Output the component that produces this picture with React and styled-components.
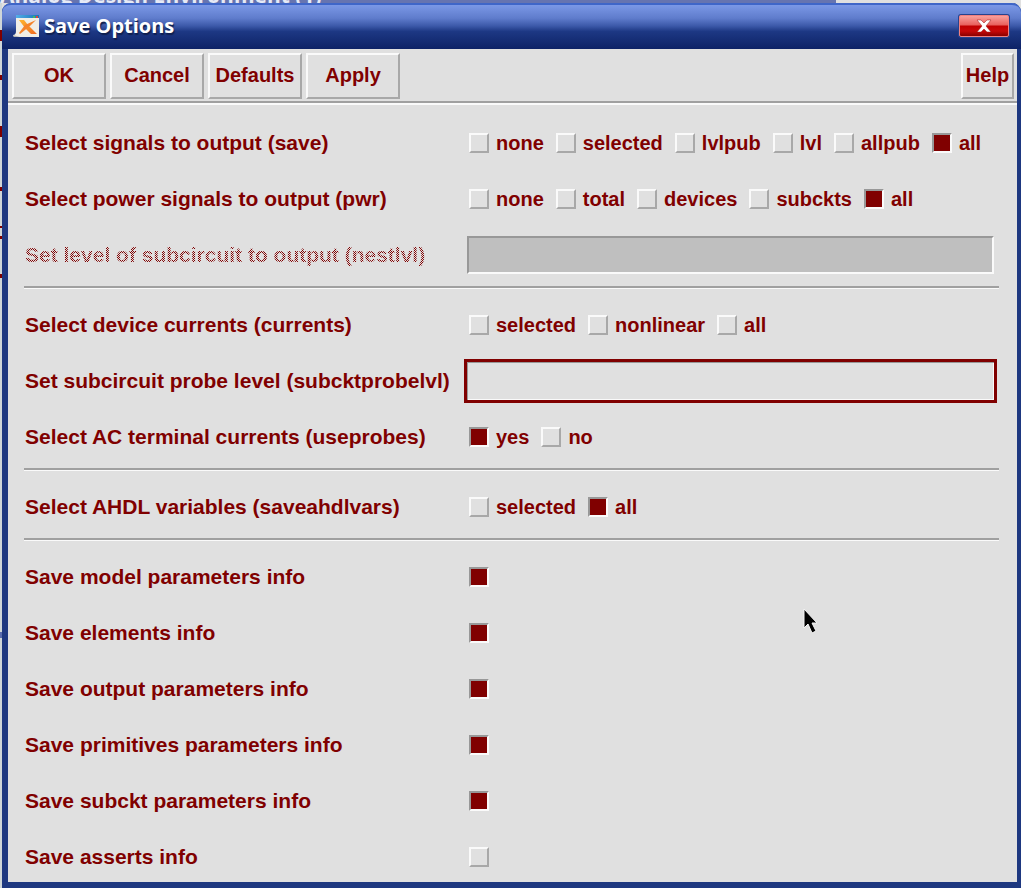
import React from "react";
import styled, { createGlobalStyle, css } from "styled-components";

const maroon = "#800000";
const face = "#e0e0e0";

const GlobalStyle = createGlobalStyle`
  *, *::before, *::after { box-sizing: border-box; }
  body { margin: 0; background: ${face}; color: ${maroon}; font: bold 20px/28px "Liberation Sans", Arial, sans-serif; }
  button, input { font: inherit; color: inherit; }
`;

const raised = css`
  border: 2px solid;
  border-color: #fafafa #a8a8a8 #a8a8a8 #fafafa;
`;
const sunken = css`
  border: 2px solid;
  border-color: #989898 #fafafa #fafafa #989898;
`;

const Desktop = styled.div`
  position: relative;
  min-height: 100vh;
  overflow: hidden;
  padding-left: 2px;
  background:
    linear-gradient(
      transparent 30px, ${maroon} 30px 41px, transparent 41px 75px,
      ${maroon} 75px 80px, transparent 80px 126px, ${maroon} 126px 137px,
      transparent 137px 187px, ${maroon} 187px 191px, transparent 191px 226px,
      ${maroon} 226px 228px, transparent 228px 236px, ${maroon} 236px 239px,
      transparent 239px 274px, ${maroon} 274px 278px, transparent 278px 632px,
      #5a6cae 632px 638px, transparent 638px
    ) 0 0 / 2px 100% no-repeat,
    linear-gradient(90deg, #cfd6d8 2px, ${face} 2px);
`;
const BackTitle = styled.div`
  height: 3px;
  width: 82%;
  margin-left: -2px;
  display: flex;
  align-items: flex-end;
  overflow: hidden;
  background: #6674b0;
  color: #e6eaf6;
  font: bold 21px/16px "Open Sans", sans-serif;
  white-space: nowrap;
`;
const Dialog = styled.section`
  display: flex;
  flex-direction: column;
  border: solid #1e3880;
  border-width: 0 4px 6px 6px;
  border-radius: 9px 9px 0 0;
  background: ${face};
`;
const TitleBar = styled.header`
  display: flex;
  align-items: center;
  height: 46px;
  margin: 0 -4px 0 -6px;
  padding: 0 12px 2px 10px;
  gap: 4px;
  border-radius: 9px 9px 0 0;
  border-top: 2px solid #3f66c8;
  background: linear-gradient(#7b98e6, #5f7ccc 30%, #3b58a8 48%, #1d3884 60%, #0d2266);
`;
const Title = styled.h1`
  flex: 1;
  margin: 0;
  color: #fff;
  font: bold 20px/28px "Open Sans", sans-serif;
  text-shadow: 1px 2px 1px #102050;
`;
const CloseButton = styled.button`
  display: grid;
  place-items: center;
  width: 50px;
  height: 22px;
  padding: 0;
  border: 1px solid #f08080;
  border-radius: 2px;
  background: linear-gradient(#f9a09c, #e8605c 45%, #c00000 50%, #c80808 75%, #8a0000);
  box-shadow: 0 0 0 1px #27438e;
`;
const Toolbar = styled.nav`
  display: flex;
  gap: 4px;
  padding: 4px 3px 2px 4px;
  border-bottom: 2px solid #a0a0a0;
  box-shadow: 0 2px 0 #fafafa;
`;
const ToolButton = styled.button`
  ${raised}
  width: ${(p) => (p.$compact ? 53 : 94)}px;
  height: 46px;
  margin-left: ${(p) => (p.$compact ? "auto" : 0)};
  padding: 0 0 2px;
  background: ${face};
`;
const Form = styled.form`
  display: flex;
  flex-direction: column;
  padding: 26px 18px 11px 16px;
`;
const Section = styled.div`
  display: flex;
  flex-direction: column;
  gap: 28px;
`;
const Separator = styled.hr`
  width: 100%;
  margin: 17px 0 22px;
  border: solid;
  border-width: 2px 0 1px;
  border-color: #a0a0a0 transparent #fafafa;
`;
const Row = styled.div`
  display: grid;
  grid-template: 28px / 440px 1fr;
  align-items: center;
`;
const Label = styled.label`
  justify-self: start;
  padding-left: 1px;
  font-size: 21px;
  white-space: nowrap;
  ${(p) => p.$dim && css`
    color: transparent;
    background: repeating-conic-gradient(${maroon} 0 25%, ${face} 0 50%) 0 0 / 2px 2px;
    background-clip: text;
    -webkit-background-clip: text;
  `}
`;
const Options = styled.div`
  display: flex;
  gap: 12px;
  padding-left: 5px;
`;
const Option = styled.label`
  display: flex;
  align-items: center;
  gap: 7px;
  white-space: nowrap;
`;
const Box = styled.input`
  ${raised}
  appearance: none;
  width: 20px;
  height: 20px;
  margin: 0;
  background: ${face};
  &:checked { ${sunken} background: ${maroon}; }
`;
const Field = styled.input`
  ${sunken}
  align-self: center;
  width: calc(100% - 8px);
  height: 38px;
  margin: 0 0 0 3px;
  padding: 0 6px;
  border-radius: 0;
  background: ${face};
  &:disabled { background: #bfbfbf; }
  ${(p) => p.$active && css`
    width: calc(100% - 2px);
    height: 44px;
    margin: 0;
    border: 3px solid ${maroon};
    outline: none;
    box-shadow: inset 1px 1px 0 #989898, inset -1px -1px 0 #fafafa;
  `}
`;
const Pointer = styled.svg`
  position: absolute;
  left: 802px;
  top: 607px;
`;

function Choices({ id, label, options, value }) {
  return (
    <Row role="group" aria-labelledby={id}>
      <Label as="span" id={id}>{label}</Label>
      <Options>
        {options.map((o) => (
          <Option key={o}>
            <Box type="radio" name={id} defaultChecked={o === value} />
            {o}
          </Option>
        ))}
      </Options>
    </Row>
  );
}

const infoRows = [
  ["model parameters", true],
  ["elements", true],
  ["output parameters", true],
  ["primitives parameters", true],
  ["subckt parameters", true],
  ["asserts", false],
];

export default function App() {
  return (
    <Desktop>
      <GlobalStyle />
      <BackTitle aria-hidden="true">Analog Design Environment (1)</BackTitle>
      <Dialog role="dialog" aria-labelledby="title">
        <TitleBar>
          <svg width="28" height="26" viewBox="0 0 28 26" aria-hidden="true">
            <defs>
              <linearGradient id="sky" x2="1"><stop stopColor="#54aee8" /><stop offset="1" stopColor="#1674b8" /></linearGradient>
              <linearGradient id="flame" x2="1" y2="1"><stop stopColor="#ffb52d" /><stop offset="1" stopColor="#f06a20" /></linearGradient>
            </defs>
            <path d="M4 2H27V24H2L1 22Q4 22 4 18Z" fill="#f1eee6" />
            <path d="M4 2H27V5H4Z" fill="url(#sky)" />
            <path d="M21 3h2v2h-2z" fill="#48b860" /><path d="M24 3h2v2h-2z" fill="#d8453c" />
            <path d="M7 7H12L16 12L25 21H19L13 15Z" fill="url(#flame)" />
            <path d="M24 7L18 13L8 21L7 20L13 12Z" fill="#f5832a" />
            <path d="M1 22Q5 23 8 24H2Z" fill="#b9b9b5" />
          </svg>
          <Title id="title">Save Options</Title>
          <CloseButton aria-label="Close">
            <svg width="16" height="14" viewBox="0 0 16 14">
              <path d="M1 1H5L8 4L11 1H15L10 7L15 13H11L8 10L5 13H1L6 7Z" fill="#fff" stroke="#9a1616" strokeWidth=".5" />
            </svg>
          </CloseButton>
        </TitleBar>
        <Toolbar>
          <ToolButton>OK</ToolButton>
          <ToolButton>Cancel</ToolButton>
          <ToolButton>Defaults</ToolButton>
          <ToolButton>Apply</ToolButton>
          <ToolButton $compact>Help</ToolButton>
        </Toolbar>
        <Form>
          <Section>
            <Choices id="save" label="Select signals to output (save)" options={["none", "selected", "lvlpub", "lvl", "allpub", "all"]} value="all" />
            <Choices id="pwr" label="Select power signals to output (pwr)" options={["none", "total", "devices", "subckts", "all"]} value="all" />
            <Row>
              <Label $dim htmlFor="nestlvl">Set level of subcircuit to output (nestlvl)</Label>
              <Field id="nestlvl" disabled />
            </Row>
          </Section>
          <Separator />
          <Section>
            <Choices id="currents" label="Select device currents (currents)" options={["selected", "nonlinear", "all"]} />
            <Row>
              <Label htmlFor="probelvl">Set subcircuit probe level (subcktprobelvl)</Label>
              <Field $active id="probelvl" />
            </Row>
            <Choices id="useprobes" label="Select AC terminal currents (useprobes)" options={["yes", "no"]} value="yes" />
          </Section>
          <Separator />
          <Section>
            <Choices id="ahdl" label="Select AHDL variables (saveahdlvars)" options={["selected", "all"]} value="all" />
          </Section>
          <Separator />
          <Section>
            {infoRows.map(([name, on]) => (
              <Row key={name}>
                <Label htmlFor={name}>Save {name} info</Label>
                <Options><Box type="checkbox" id={name} defaultChecked={on} /></Options>
              </Row>
            ))}
          </Section>
        </Form>
      </Dialog>
      <Pointer width="17" height="28" viewBox="0 0 17 28" aria-hidden="true">
        <path d="M2 2V21L6 17L10 26L14 24L10 16H15Z" fill="#000" stroke="#f4f4f4" strokeWidth="1" />
      </Pointer>
    </Desktop>
  );
}
